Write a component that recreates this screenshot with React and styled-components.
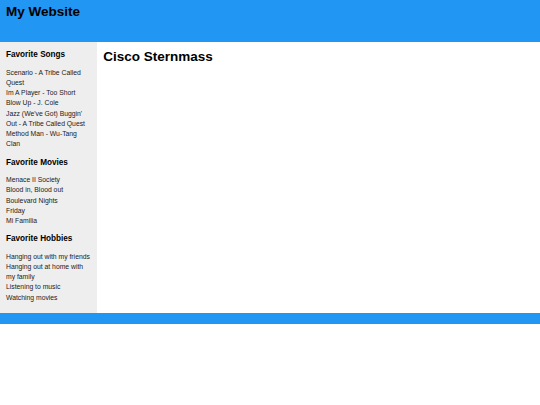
import styled, { createGlobalStyle } from "styled-components";

const favorites = [
  {
    title: "Favorite Songs",
    items: [
      "Scenario - A Tribe Called Quest",
      "Im A Player - Too Short",
      "Blow Up - J. Cole",
      "Jazz (We've Got) Buggin' Out - A Tribe Called Quest",
      "Method Man - Wu-Tang Clan",
    ],
  },
  {
    title: "Favorite Movies",
    items: [
      "Menace II Society",
      "Blood in, Blood out",
      "Boulevard Nights",
      "Friday",
      "Mi Familia",
    ],
  },
  {
    title: "Favorite Hobbies",
    items: [
      "Hanging out with my friends",
      "Hanging out at home with my family",
      "Listening to music",
      "Watching movies",
    ],
  },
];

const App = () => {
  return (
    <>
      <GlobalStyle />
      <Header>
        <SiteTitle>My Website</SiteTitle>
      </Header>
      <Body>
        <Sidebar>
          {favorites.map((group) => (
            <section key={group.title}>
              <GroupTitle>{group.title}</GroupTitle>
              <List>
                {group.items.map((item) => (
                  <li key={item}>{item}</li>
                ))}
              </List>
            </section>
          ))}
        </Sidebar>
        <Main>
          <Name>Cisco Sternmass</Name>
        </Main>
      </Body>
      <Footer />
    </>
  );
};

const GlobalStyle = createGlobalStyle`
  body {
    margin: 0;
    background: #fff;
    color: #000;
    font-family: "Liberation Sans", Arial, sans-serif;
  }
`;

const Header = styled.header`
  background: #2196f3;
  height: 42px;
  box-sizing: border-box;
  padding: 3.5px 6px 0;
`;

const SiteTitle = styled.h1`
  margin: 0;
  font-size: 13.5px;
  line-height: 1.15;
  font-weight: bold;
`;

const Body = styled.div`
  display: flex;
`;

const Sidebar = styled.aside`
  width: 18%;
  background: #eeeeee;
  box-sizing: border-box;
  padding: 0 6px 10.3px;
`;

const GroupTitle = styled.h3`
  margin: 8.3px 0 7.7px;
  font-size: 8.2px;
  line-height: 10px;
  font-weight: bold;
`;

const List = styled.ul`
  margin: 0;
  padding: 0;
  list-style: none;
  font-size: 6.8px;
  line-height: 10.15px;
  color: #222;
`;

const Main = styled.main`
  flex: 1;
  padding: 6.5px 6px;
`;

const Name = styled.h1`
  margin: 0;
  font-size: 13.5px;
  line-height: 1.15;
  font-weight: bold;
`;

const Footer = styled.footer`
  background: #2196f3;
  height: 10.5px;
`;

export default App;
